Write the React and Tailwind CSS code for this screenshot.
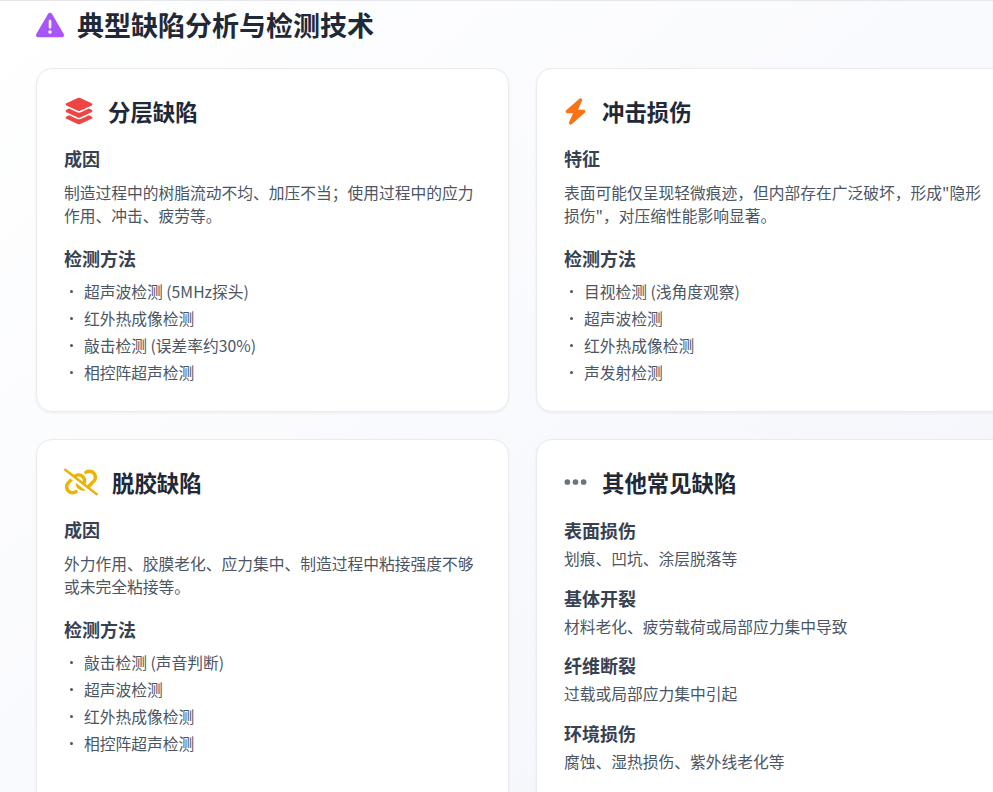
import React from "react";
import { FaTriangleExclamation, FaLayerGroup, FaBolt, FaLinkSlash, FaEllipsis } from "react-icons/fa6";

function Title({ icon, gap, children }) {
  return (
    <div className={`flex items-center ${gap} h-[32px] mb-[19px]`}>
      {icon}
      <h3 className="text-[22.4px] leading-[32px] font-bold text-[#1f2937]">{children}</h3>
    </div>
  );
}

function Sub({ children, className = "" }) {
  return <h4 className={`text-[18px] leading-[25px] font-bold text-[#374151] ${className}`}>{children}</h4>;
}

function Para({ children }) {
  return <p className="text-[15.75px] leading-[23px] text-[#4b5563] mt-[10px]">{children}</p>;
}

function Methods({ items }) {
  return (
    <ul className="mt-[7px]">
      {items.map((t) => (
        <li key={t} className="flex items-center h-[27px] text-[15.75px] text-[#4b5563]">
          <span className="w-[3px] h-[3px] rounded-full bg-[#4b5563] ml-[6px] mr-[11px]" />
          {t}
        </li>
      ))}
    </ul>
  );
}

function Card({ children, className = "" }) {
  return (
    <div className={`bg-white border border-[#e9ebef] rounded-[16px] shadow-[0_1px_3px_rgba(0,0,0,0.06)] pt-[26px] px-[27px] ${className}`}>
      {children}
    </div>
  );
}

function Other({ title, text }) {
  return (
    <div className="mb-[13.5px]">
      <Sub>{title}</Sub>
      <p className="text-[15.75px] leading-[27px] text-[#4b5563] mt-[2px]">{text}</p>
    </div>
  );
}

export default function App() {
  return (
    <div
      className="h-[792px] w-[993px] overflow-hidden border-t border-[#e5e7eb] bg-gradient-to-br from-white to-[#f3f5fb] pl-[36px]"
      style={{ fontFamily: '"Noto Sans CJK SC", sans-serif' }}
    >
      <div className="flex items-center gap-[13px] h-[47px] mb-[20px]">
        <FaTriangleExclamation className="text-[#a855f7] w-[28px] h-[28px]" />
        <h2 className="text-[27px] leading-[45px] font-bold text-[#1f2937] -mt-[1px]">典型缺陷分析与检测技术</h2>
      </div>
      <div className="grid grid-cols-[473px_473px] gap-x-[27px] gap-y-[27px] w-[973px]">
        <Card className="h-[344px]">
          <Title gap="gap-[14px]" icon={<FaLayerGroup className="text-[#ef4444] w-[30px] h-[30px]" />}>分层缺陷</Title>
          <Sub>成因</Sub>
          <Para>{"制造过程中的树脂流动不均、加压不当\uFF1B使用过程中的应力作用、冲击、疲劳等。"}</Para>
          <Sub className="mt-[19px]">检测方法</Sub>
          <Methods items={["超声波检测 (5MHz探头)", "红外热成像检测", "敲击检测 (误差率约30%)", "相控阵超声检测"]} />
        </Card>
        <Card className="h-[344px]">
          <Title gap="gap-[15px]" icon={<FaBolt className="text-[#f97316] w-[23px] h-[29px]" />}>冲击损伤</Title>
          <Sub>特征</Sub>
          <Para>{"表面可能仅呈现轻微痕迹\uFF0C但内部存在广泛破坏\uFF0C形成\"隐形损伤\"\uFF0C对压缩性能影响显著。"}</Para>
          <Sub className="mt-[19px]">检测方法</Sub>
          <Methods items={["目视检测 (浅角度观察)", "超声波检测", "红外热成像检测", "声发射检测"]} />
        </Card>
        <Card className="h-[400px]">
          <Title gap="gap-[14px]" icon={<FaLinkSlash className="text-[#eab308] w-[34px] h-[28px]" />}>脱胶缺陷</Title>
          <Sub>成因</Sub>
          <Para>外力作用、胶膜老化、应力集中、制造过程中粘接强度不够或未完全粘接等。</Para>
          <Sub className="mt-[19px]">检测方法</Sub>
          <Methods items={["敲击检测 (声音判断)", "超声波检测", "红外热成像检测", "相控阵超声检测"]} />
        </Card>
        <Card className="h-[400px]">
          <Title gap="gap-[15px]" icon={<FaEllipsis className="text-[#6b7280] w-[23px] h-[26px]" />}>其他常见缺陷</Title>
          <div className="mt-[20px]">
            <Other title="表面损伤" text="划痕、凹坑、涂层脱落等" />
            <Other title="基体开裂" text="材料老化、疲劳载荷或局部应力集中导致" />
            <Other title="纤维断裂" text="过载或局部应力集中引起" />
            <Other title="环境损伤" text="腐蚀、湿热损伤、紫外线老化等" />
          </div>
        </Card>
      </div>
    </div>
  );
}
